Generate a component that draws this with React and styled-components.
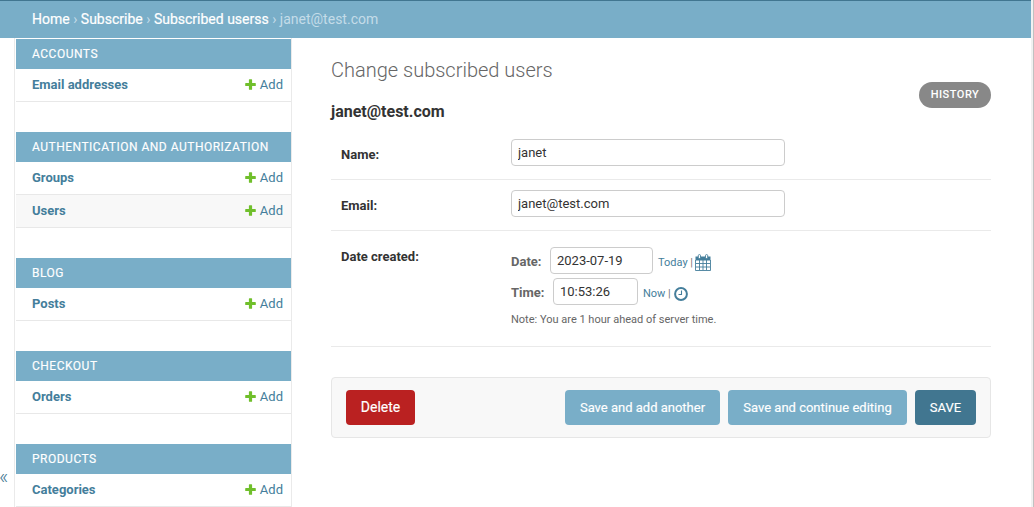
import React from 'react';
import styled, { createGlobalStyle } from 'styled-components';

const GlobalStyle = createGlobalStyle`
  * { box-sizing: border-box; }
  body {
    margin: 0;
    overflow: hidden;
    background: #fff;
    color: #333;
    font-family: Roboto, "Liberation Sans", sans-serif;
    font-size: 13px;
  }
`;

const Frame = styled.div`
  height: 507px;
  display: flex;
  overflow: hidden;
`;
const Page = styled.div`
  flex: 1;
  min-width: 0;
  display: flex;
  flex-direction: column;
`;
const ScrollEdge = styled.div`
  width: 3px;
  background: #f1f1f1;
  border-right: 1px solid #c1c1c1;
`;
const Breadcrumbs = styled.nav`
  height: 38px;
  flex: none;
  padding-left: 32px;
  border-top: 1px solid #417690;
  background: #79aec8;
  color: #c4dce8;
  font-size: 14px;
  line-height: 37px;
  white-space: pre;
`;
const Crumb = styled.a`
  color: #fff;
  -webkit-text-stroke: 0.2px #fff;
`;
const Main = styled.div`
  flex: 1;
  min-height: 0;
  display: flex;
`;
const Toggle = styled.button`
  width: 14px;
  padding: 425px 6px 0 0;
  border: 0;
  background: #fff;
  color: #417690;
  font: 300 20px/26px Roboto, sans-serif;
  display: flex;
  align-items: flex-start;
  justify-content: flex-end;
`;
const Sidebar = styled.aside`
  width: 278px;
  padding: 1px 0 0 1px;
  border: solid #eaeaea;
  border-width: 0 1px;
  overflow: hidden;
`;
const Module = styled.section`
  margin-bottom: 30px;
`;
const Caption = styled.h2`
  height: 30px;
  margin: 0;
  padding-left: 16px;
  background: #79aec8;
  color: #fff;
  font-size: 12px;
  font-weight: 400;
  line-height: 30px;
  letter-spacing: 0.5px;
  -webkit-text-stroke: 0.15px #fff;
  text-transform: uppercase;
  white-space: nowrap;
`;
const ModelRow = styled.div`
  height: 33px;
  padding: 0 8px 1px 16px;
  border-bottom: 1px solid #e8e8e8;
  background: ${p => (p.$shaded ? '#f8f8f8' : '#fff')};
  color: #447e9b;
  display: flex;
  align-items: center;
`;
const ModelName = styled.a`
  flex: 1;
  font-weight: 700;
`;
const AddLink = styled.a`
  display: flex;
  align-items: center;
  gap: 4px;
`;
const Content = styled.main`
  width: 699px;
  padding: 20px 0 0 39px;
`;
const Title = styled.h1`
  height: 24px;
  margin: 0 0 17px;
  color: #666;
  font-size: 20px;
  font-weight: 300;
  line-height: 24px;
`;
const Heading = styled.div`
  height: 30px;
  display: flex;
  justify-content: space-between;
`;
const Subject = styled.h2`
  margin: 0;
  padding-top: 3px;
  font-size: 16px;
  font-weight: 700;
  line-height: 20px;
`;
const History = styled.a`
  height: 26px;
  width: 72px;
  margin-top: -17px;
  border-radius: 13px;
  background: #888;
  color: #fff;
  font-size: 11px;
  font-weight: 500;
  line-height: 25px;
  letter-spacing: 0.5px;
  text-align: center;
`;
const FormRow = styled.div`
  width: 660px;
  height: ${p => p.$height}px;
  padding: ${p => p.$top}px 10px 0;
  border-bottom: 1px solid #eaeaea;
  display: flex;
`;
const Label = styled.label`
  width: 170px;
  padding-top: ${p => p.$top}px;
  line-height: 16px;
  font-weight: 700;
`;
const Input = styled.input`
  width: ${p => p.$width}px;
  height: 27px;
  margin: 0;
  padding: 0 6px;
  border: 1px solid #ccc;
  border-radius: 4px;
  outline: 0;
  background: #fff;
  color: #333;
  font: 13px Roboto, sans-serif;
`;
const DateTime = styled.div`
  display: flex;
  flex-direction: column;
  gap: 4px;
`;
const Part = styled.div`
  display: flex;
  align-items: center;
  height: 27px;
`;
const PartLabel = styled.span`
  width: ${p => p.$width}px;
  padding-top: 2px;
  color: #666;
  font-weight: 700;
`;
const Shortcuts = styled.span`
  padding: 3px 0 0 5px;
  color: #447e9b;
  font-size: 11px;
  display: flex;
  align-items: center;
  white-space: pre;
`;
const Divider = styled.span`
  width: ${p => p.$width}px;
  color: #777;
`;
const Note = styled.div`
  margin-top: 3px;
  color: #666;
  font-size: 11px;
  line-height: 16px;
`;
const SubmitRow = styled.div`
  width: 660px;
  height: 61px;
  margin-top: 30px;
  padding: 12px 14px;
  border: 1px solid #e6e6e6;
  border-radius: 4px;
  background: #f8f8f8;
  display: flex;
  gap: 8px;
`;
const tones = { danger: '#ba2121', normal: '#79aec8', primary: '#417690' };
const Button = styled.button`
  width: ${p => p.$width}px;
  height: 35px;
  margin: 0 ${p => (p.$tone === 'danger' ? 'auto' : 0)} 0 0;
  padding: 0 0 ${p => (p.$tone === 'danger' ? 1 : 0)}px;
  border: 0;
  border-radius: 4px;
  background: ${p => tones[p.$tone]};
  color: #fff;
  font-family: Roboto, sans-serif;
  font-size: ${p => (p.$tone === 'danger' ? 14 : 13)}px;
  -webkit-text-stroke: 0.15px #fff;
  white-space: nowrap;
`;

const Plus = () => (
  <svg width="11" height="11" viewBox="0 0 11 11">
    <path d="M4.5 0.2h2q.6 0 .6.5v3.2h3.1q.6 0 .6.5v2.2q0 .5-.6.5h-3.1v3.2q0 .5-.6.5h-2q-.6 0-.6-.5v-3.2h-3.1q-.6 0-.6-.5v-2.2q0-.5.6-.5h3.1v-3.2q0-.5.6-.5z" fill="#70bf2b" />
  </svg>
);

const CalendarIcon = () => (
  <svg width="16" height="17" viewBox="0 0 16 17">
    <path d="M1 3h14v13H1z" fill="#fff" />
    <path d="M0.5 2.5h15v4H.5z" fill="#447e9b" />
    <path d="M.5 6v10.5h15V6M4.5 6v10M8 6v10M11.5 6v10M1 9.5h14M1 13h14" fill="none" stroke="#447e9b" strokeWidth=".9" />
    <rect x="3.3" y=".6" width="2.2" height="4" rx="1" fill="#fff" stroke="#447e9b" strokeWidth=".9" />
    <rect x="10.5" y=".6" width="2.2" height="4" rx="1" fill="#fff" stroke="#447e9b" strokeWidth=".9" />
  </svg>
);

const ClockIcon = () => (
  <svg width="14" height="15" viewBox="0 0 14 15" fill="none" stroke="#447e9b">
    <circle cx="7" cy="8" r="5.9" strokeWidth="2" />
    <path d="M7.5 4.5v4H4.5" strokeWidth="1.1" />
  </svg>
);

const modules = [
  { name: 'Accounts', models: ['Email addresses'] },
  { name: 'Authentication and Authorization', models: ['Groups', 'Users'] },
  { name: 'Blog', models: ['Posts'] },
  { name: 'Checkout', models: ['Orders'] },
  { name: 'Products', models: ['Categories'] },
];

export default function App() {
  return (
    <Frame>
      <GlobalStyle />
      <Page>
        <Breadcrumbs>
          <Crumb>Home</Crumb> › <Crumb>Subscribe</Crumb> › <Crumb>Subscribed userss</Crumb> › janet@test.com
        </Breadcrumbs>
        <Main>
          <Toggle>«</Toggle>
          <Sidebar>
            {modules.map(m => (
              <Module key={m.name}>
                <Caption>{m.name}</Caption>
                {m.models.map((name, i) => (
                  <ModelRow key={name} $shaded={i % 2 === 1}>
                    <ModelName>{name}</ModelName>
                    <AddLink><Plus />Add</AddLink>
                  </ModelRow>
                ))}
              </Module>
            ))}
          </Sidebar>
          <Content>
            <Title>Change subscribed users</Title>
            <Heading>
              <Subject>janet@test.com</Subject>
              <History>HISTORY</History>
            </Heading>
            <FormRow $height={51} $top={10}>
              <Label $top={8}>Name:</Label>
              <Input $width={274} defaultValue="janet" />
            </FormRow>
            <FormRow $height={51} $top={10}>
              <Label $top={8}>Email:</Label>
              <Input $width={274} defaultValue="janet@test.com" />
            </FormRow>
            <FormRow $height={116} $top={16}>
              <Label $top={2}>Date created:</Label>
              <DateTime>
                <Part>
                  <PartLabel $width={39}>Date:</PartLabel>
                  <Input $width={103} defaultValue="2023-07-19" />
                  <Shortcuts>Today<Divider $width={7.5}> | </Divider><CalendarIcon /></Shortcuts>
                </Part>
                <Part>
                  <PartLabel $width={42}>Time:</PartLabel>
                  <Input $width={85} defaultValue="10:53:26" />
                  <Shortcuts>Now<Divider $width={8.5}> | </Divider><ClockIcon /></Shortcuts>
                </Part>
                <Note>Note: You are 1 hour ahead of server time.</Note>
              </DateTime>
            </FormRow>
            <SubmitRow>
              <Button $tone="danger" $width={69}>Delete</Button>
              <Button $tone="normal" $width={155}>Save and add another</Button>
              <Button $tone="normal" $width={179}>Save and continue editing</Button>
              <Button $tone="primary" $width={61}>SAVE</Button>
            </SubmitRow>
          </Content>
        </Main>
      </Page>
      <ScrollEdge />
    </Frame>
  );
}
